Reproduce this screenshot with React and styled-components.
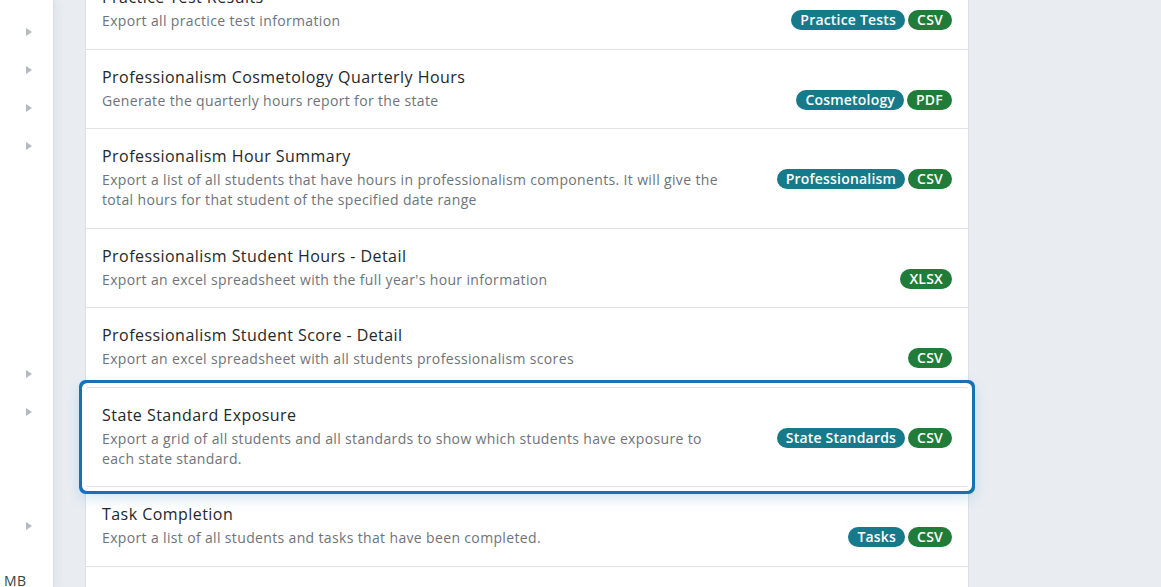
import React from 'react'
import styled, { createGlobalStyle } from 'styled-components';

const GlobalStyle = createGlobalStyle`
  html, body { margin: 0; padding: 0; height: 100%; }
  body {
    font-family: "Open Sans", "Noto Sans", sans-serif;
    background: #e9edf2;
    overflow: hidden;
  }
  #root { height: 100%; }
`;

const Shell = styled.div`
  display: flex;
  height: 587px;
  overflow: hidden;
`;

const Sidebar = styled.nav`
  width: 54px;
  flex-shrink: 0;
  background: #fff;
  border-right: 1px solid #d9dee4;
  display: flex;
  flex-direction: column;
  padding-top: 13px;
  box-sizing: border-box;
  box-shadow: 2px 0 10px rgba(160, 170, 185, 0.18);
  z-index: 2;
`;

const NavSlot = styled.div`
  height: 38px;
  display: flex;
  align-items: center;
  justify-content: center;
  padding-left: 4px;
`;

const Caret = styled.span`
  width: 0;
  height: 0;
  border-top: 4px solid transparent;
  border-bottom: 4px solid transparent;
  border-left: 6px solid #b4bac1;
`;

const Initials = styled.div`
  margin-top: auto;
  margin-bottom: -3px;
  padding-left: 4px;
  height: 18px;
  font-size: 14px;
  letter-spacing: 0.3px;
  color: #3a3f45;
  line-height: 18px;
`;

const Main = styled.main`
  flex: 1;
  padding-left: 31px;
  overflow: hidden;
`;

const ReportList = styled.div`
  width: 884px;
  margin-top: -30px;
  background: #fff;
  border-left: 1px solid #dcdfe4;
  border-right: 1px solid #dcdfe4;
  box-sizing: border-box;
`;

const Row = styled.div`
  position: relative;
  display: flex;
  gap: 40px;
  padding: 16px 16px 17.5px 16px;
  border-bottom: 1px solid #dfe2e6;
  background: #fff;
  ${({ $active }) => $active && `
    z-index: 1;
    border-top: 1px solid #dfe2e6;
    margin-top: -1px;
    border-radius: 2px;
    box-shadow: 0 0 0 4px #fff, 0 0 0 7px #1672b2, 0 5px 14px 6px rgba(22, 114, 178, 0.2);
  `}
`;

const Info = styled.div`
  flex: 1;
  max-width: 630px;
`;

const Title = styled.div`
  font-size: 16px;
  line-height: 22px;
  letter-spacing: 0.45px;
  color: #24272b;
  margin-bottom: 3px;
`;

const Desc = styled.div`
  font-size: 14px;
  line-height: 20px;
  letter-spacing: 0.35px;
  color: #6e737a;
`;

const Tags = styled.div`
  margin-left: auto;
  padding-top: 24px;
  display: flex;
  gap: 3px;
  align-items: flex-start;
`;

const Tag = styled.span`
  height: 20px;
  line-height: 20px;
  padding: 0 9px;
  border-radius: 10px;
  font-size: 14px;
  font-weight: 600;
  letter-spacing: 0.2px;
  color: #fff;
  white-space: nowrap;
  background: ${({ $kind }) => ($kind === 'format' ? '#207d39' : '#177a8b')};
`;

const reports = [
  { title: 'Practice Test Results', desc: 'Export all practice test information', tags: ['Practice Tests'], format: 'CSV' },
  { title: 'Professionalism Cosmetology Quarterly Hours', desc: 'Generate the quarterly hours report for the state', tags: ['Cosmetology'], format: 'PDF' },
  { title: 'Professionalism Hour Summary', desc: 'Export a list of all students that have hours in professionalism components. It will give the total hours for that student of the specified date range', tags: ['Professionalism'], format: 'CSV' },
  { title: 'Professionalism Student Hours - Detail', desc: "Export an excel spreadsheet with the full year's hour information", tags: [], format: 'XLSX' },
  { title: 'Professionalism Student Score - Detail', desc: 'Export an excel spreadsheet with all students professionalism scores', tags: [], format: 'CSV' },
  { title: 'State Standard Exposure', desc: 'Export a grid of all students and all standards to show which students have exposure to each state standard.', tags: ['State Standards'], format: 'CSV', active: true },
  { title: 'Task Completion', desc: 'Export a list of all students and tasks that have been completed.', tags: ['Tasks'], format: 'CSV' },
  { title: 'Test Results', desc: 'Export all test results', tags: ['Tests'], format: 'CSV' },
];

const navSlots = [true, true, true, true, false, false, false, false, false, true, true, false, false, true];

const App = () => {
  return (
    <>
      <GlobalStyle />
      <Shell>
        <Sidebar>
          {navSlots.map((hasCaret, i) => (
            <NavSlot key={i}>{hasCaret && <Caret />}</NavSlot>
          ))}
          <Initials>MB</Initials>
        </Sidebar>
        <Main>
          <ReportList>
            {reports.map((r) => (
              <Row key={r.title} $active={r.active}>
                <Info>
                  <Title>{r.title}</Title>
                  <Desc>{r.desc}</Desc>
                </Info>
                <Tags>
                  {r.tags.map((t) => <Tag key={t}>{t}</Tag>)}
                  <Tag $kind="format">{r.format}</Tag>
                </Tags>
              </Row>
            ))}
          </ReportList>
        </Main>
      </Shell>
    </>
  )
}

export default App
